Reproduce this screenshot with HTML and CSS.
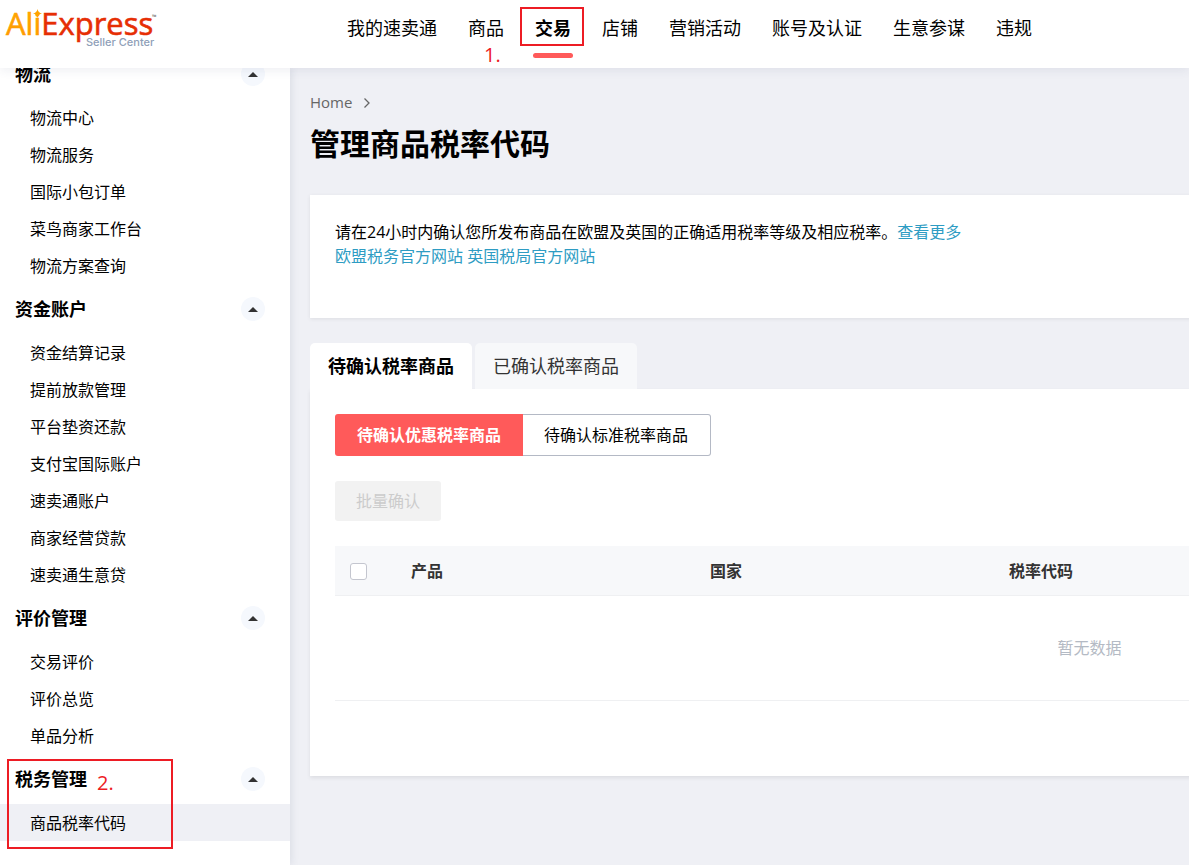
FILE: index.html
```html
<!DOCTYPE html>
<html lang="zh-CN">
<head>
<meta charset="utf-8">
<meta name="viewport" content="width=device-width, initial-scale=1">
<title>管理商品税率代码</title>
<link rel="stylesheet" href="styles.css">
</head>
<body>
<header class="header">
  <a class="logo" href="#" aria-label="AliExpress Seller Center">
    <svg width="160" height="50" viewBox="0 0 160 50">
      <defs>
        <linearGradient id="ali" x1="0" y1="0" x2="0" y2="1">
          <stop offset="0" stop-color="#ffb000"/>
          <stop offset="1" stop-color="#ff9400"/>
        </linearGradient>
      </defs>
      <text class="logo-word" x="6" y="35"><tspan fill="url(#ali)" stroke="#ff9c00">Ali</tspan><tspan fill="#e62e04" stroke="#e62e04">Express</tspan></text>
      <path d="M37.500 9Q38.200 12.800 42 13.500Q38.200 14.200 37.500 18Q36.800 14.200 33 13.500Q36.800 12.800 37.500 9Z" fill="#ffa200"/>
      <text class="logo-tm" x="152" y="19">™</text>
      <text class="logo-sub" x="86" y="46">Seller Center</text>
    </svg>
  </a>
  <nav class="nav">
    <a href="#">我的速卖通</a>
    <a href="#">商品<span class="note note-one">1.</span></a>
    <a href="#" class="active">交易<span class="mark mark-nav"></span></a>
    <a href="#">店铺</a>
    <a href="#">营销活动</a>
    <a href="#">账号及认证</a>
    <a href="#">生意参谋</a>
    <a href="#">违规</a>
  </nav>
</header>

<div class="layout">
  <aside class="sidebar">
    <div class="menu">
      <section class="group">
        <h2>物流<button class="fold" type="button" aria-label="收起物流"></button></h2>
        <a href="#">物流中心</a>
        <a href="#">物流服务</a>
        <a href="#">国际小包订单</a>
        <a href="#">菜鸟商家工作台</a>
        <a href="#">物流方案查询</a>
      </section>
      <section class="group">
        <h2>资金账户<button class="fold" type="button" aria-label="收起资金账户"></button></h2>
        <a href="#">资金结算记录</a>
        <a href="#">提前放款管理</a>
        <a href="#">平台垫资还款</a>
        <a href="#">支付宝国际账户</a>
        <a href="#">速卖通账户</a>
        <a href="#">商家经营贷款</a>
        <a href="#">速卖通生意贷</a>
      </section>
      <section class="group">
        <h2>评价管理<button class="fold" type="button" aria-label="收起评价管理"></button></h2>
        <a href="#">交易评价</a>
        <a href="#">评价总览</a>
        <a href="#">单品分析</a>
      </section>
      <section class="group">
        <h2>税务管理<button class="fold" type="button" aria-label="收起税务管理"></button></h2>
        <a href="#" class="current">商品税率代码</a>
        <span class="mark mark-menu"></span>
        <span class="note note-two">2.</span>
      </section>
    </div>
  </aside>

  <main class="main">
    <div class="content">
      <div class="crumbs">
        <a href="#">Home</a>
        <svg width="8" height="12" viewBox="0 0 8 12"><path d="M1.500 2.500L6 7L1.500 11.500" fill="none" stroke="#666" stroke-width="1.300"/></svg>
      </div>
      <h1>管理商品税率代码</h1>

      <section class="card notice">
        <p>请在24小时内确认您所发布商品在欧盟及英国的正确适用税率等级及相应税率。<a href="#">查看更多</a></p>
        <p><a href="#">欧盟税务官方网站</a> <a href="#">英国税局官方网站</a></p>
      </section>

      <div class="tabs" role="tablist">
        <button class="tab selected" type="button" role="tab" aria-selected="true">待确认税率商品</button>
        <button class="tab" type="button" role="tab" aria-selected="false">已确认税率商品</button>
      </div>
      <section class="card panel">
        <div class="switch">
          <button class="on" type="button">待确认优惠税率商品</button>
          <button type="button">待确认标准税率商品</button>
        </div>
        <button class="bulk" type="button" disabled>批量确认</button>
        <table class="list">
          <colgroup><col class="col-check"><col class="col"><col class="col"><col class="col"><col class="col"><col></colgroup>
          <thead>
            <tr>
              <th class="check"><input type="checkbox" aria-label="全选"></th>
              <th>产品</th><th>国家</th><th>税率代码</th><th></th><th></th>
            </tr>
          </thead>
          <tbody>
            <tr><td class="empty" colspan="6">暂无数据</td></tr>
          </tbody>
        </table>
      </section>
    </div>
  </main>
</div>
</body>
</html>
```
FILE: styles.css
```css
* { box-sizing: border-box; }

body {
  margin: 0;
  min-height: 100vh;
  display: grid;
  grid-template-rows: 68px 1fr;
  background: #eff0f5;
  color: #000;
  font: 16px/24px "Open Sans", "Noto Sans CJK SC", sans-serif;
  overflow-x: hidden;
}

a { color: inherit; text-decoration: none; }
button { font: inherit; color: inherit; cursor: pointer; }
h1, h2, p { margin: 0; }

.header {
  position: relative;
  z-index: 2;
  display: flex;
  background: #fff;
  box-shadow: 0 2px 10px rgba(60, 70, 110, 0.09);
}
.logo { flex: 0 0 347px; }
.logo svg { display: block; }
.logo-word { font: 31px "Open Sans", sans-serif; stroke-width: 0.6px; }
.logo-tm { font: 6px "Open Sans", sans-serif; fill: #555; }
.logo-sub { font: 500 11px Inter, sans-serif; fill: #8f9fb8; }

.nav {
  display: flex;
  gap: 31px;
  font-size: 18px;
  line-height: 56px;
  white-space: nowrap;
}
.nav a { position: relative; height: 58px; }
.nav .active { font-weight: 700; }
.nav .active::after {
  content: "";
  position: absolute;
  left: -2px;
  bottom: 0;
  width: 40px;
  height: 5px;
  border-radius: 3px;
  background: #ff5a5a;
}

.mark { position: absolute; border: 2px solid #ed1c24; pointer-events: none; }
.mark-nav { left: -15px; top: 7px; width: 64px; height: 39px; }
.mark-menu { left: 7px; top: 5px; width: 166px; height: 90px; }
.note { position: absolute; color: #ed1c24; font-size: 20px; line-height: 24px; }
.note-one { left: 16px; top: 43px; }
.note-two { left: 97px; top: 17px; }

.layout { display: flex; min-width: 0; }

.sidebar {
  position: relative;
  z-index: 1;
  flex: 0 0 290px;
  background: #fff;
  box-shadow: 1px 0 8px rgba(60, 70, 110, 0.12);
}
.menu { margin-top: -19px; }
.group { position: relative; }
.group h2 {
  display: flex;
  align-items: center;
  justify-content: space-between;
  height: 50px;
  padding: 0 25px 0 15px;
  font-size: 18px;
}
.group a { display: block; height: 37px; padding-left: 30px; line-height: 39px; }
.group .current { background: #eff0f5; }
.fold {
  display: grid;
  place-items: center;
  width: 24px;
  height: 24px;
  padding: 0;
  border: 0;
  border-radius: 50%;
  background: #f5f8fd;
}
.fold::before {
  content: "";
  border: 5px solid transparent;
  border-top: 0;
  border-bottom-color: #333;
}

.main { flex: 1; min-width: 0; overflow: hidden; padding: 22px 0 0 20px; }
.content { min-width: 1559px; }
.crumbs { display: flex; align-items: center; gap: 11px; color: #666; font-size: 15px; }
h1 { margin: 10px 0 31px; font-size: 30px; line-height: 40px; }

.card { background: #fff; box-shadow: 0 1px 4px rgba(0, 0, 0, 0.08); }
.notice { margin-bottom: 25px; padding: 25px 25px 50px; }
.notice a { color: #2e9cc3; }

.tabs { display: flex; gap: 3px; }
.tab {
  height: 46px;
  padding: 0 18px;
  border: 0;
  border-radius: 5px 5px 0 0;
  background: #f7f8fa;
  color: #333;
  font-size: 18px;
}
.tab.selected { background: #fff; color: #000; font-weight: 700; }

.panel { padding: 25px 25px 75px; box-shadow: 0 2px 4px rgba(0, 0, 0, 0.08); }
.switch { display: flex; }
.switch button {
  height: 42px;
  padding: 0 22px 0 21px;
  border: 1px solid #b4b9c5;
  border-left: 0;
  border-radius: 0 3px 3px 0;
  background: #fff;
}
.switch .on {
  border: 0;
  border-radius: 3px 0 0 3px;
  padding: 0 22px;
  background: #ff5a5a;
  color: #fff;
  font-weight: 700;
}
.bulk {
  display: block;
  height: 40px;
  margin: 25px 0;
  padding: 0 21px;
  border: 0;
  border-radius: 3px;
  background: #f2f2f2;
  color: #ccc;
}

.list { width: 100%; table-layout: fixed; border-collapse: separate; border-spacing: 0; }
.col-check { width: 60px; }
.col { width: 299px; }
.list th {
  height: 50px;
  padding: 0 16px;
  border-bottom: 1px solid #eff0f2;
  background: #f7f8fa;
  color: #333;
  font-weight: 700;
  text-align: left;
}
.list .check { padding: 1px 15px 0; }
.list input {
  appearance: none;
  display: block;
  width: 17px;
  height: 17px;
  margin: 0;
  border: 1px solid #c4c6cf;
  border-radius: 3px;
  background: #fff;
}
.list .empty {
  height: 105px;
  padding: 0;
  border-bottom: 1px solid #eff0f2;
  color: #b4bac4;
  text-align: center;
}
```
